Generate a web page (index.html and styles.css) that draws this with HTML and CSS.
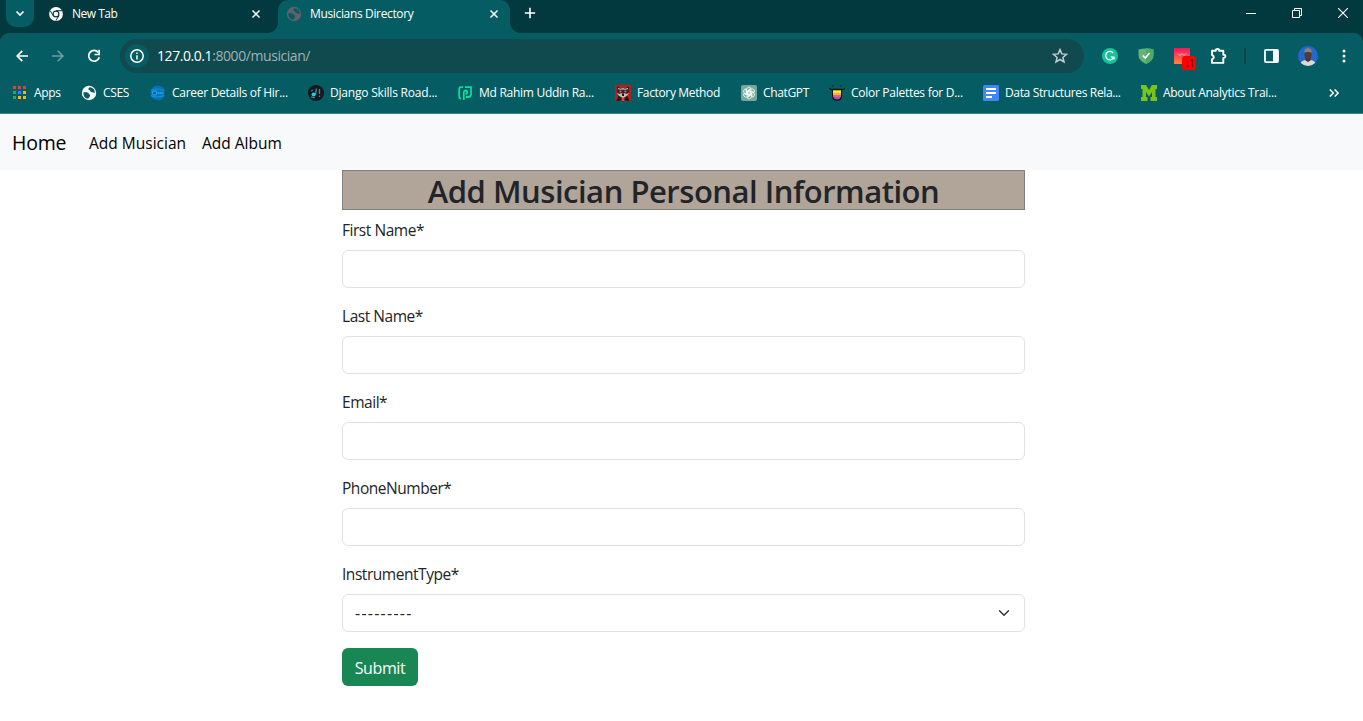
FILE: index.html
```html
<!DOCTYPE html>
<html lang="en">
<head>
<meta charset="utf-8">
<title>Musicians Directory</title>
<link rel="stylesheet" href="styles.css">
</head>
<body>
<svg width="0" height="0" class="defs">
  <symbol id="globe" viewBox="0 0 16 16"><circle cx="8" cy="8" r="7.2" fill="currentColor"/><path d="M2.300 7.200h3.200q2.200 0 2.400 1.500.100 1 1.400 1.100-.200 2.200-2.200 4-4.800-.800-4.800-6.600zM8.800 2.300q-1.600.5-1.400 1.900.200 1.100 1.600 1.100.3 1.900 1.900 2 1.600.1 2.900.9.200-4.300-3.400-5.700z" stroke="none" class="land"/></symbol>
  <symbol id="close" viewBox="0 0 10 10"><path d="M1.500 1.500l7 7M8.500 1.500l-7 7" stroke="#fff" stroke-width="1.500"/></symbol>
</svg>
<header class="browser">
  <div class="tabstrip">
    <button class="tabsearch" aria-label="Search tabs"><svg width="10" height="7" viewBox="0 0 10 7"><path d="M1.500 1.500L5 5l3.500-3.500" fill="none" stroke="#fff" stroke-width="1.700"/></svg></button>
    <div class="tab">
      <svg width="14" height="14" viewBox="0 0 14 14"><circle cx="7" cy="7" r="6.900" fill="#fff"/><circle cx="7" cy="7" r="3.500" fill="#02393e"/><circle cx="7" cy="7" r="2.300" fill="#fff"/><path d="M7 3.700h6M4.100 8.700L1.200 3.600M9.900 8.700l-3 5" stroke="#02393e" stroke-width="1"/></svg>
      <span class="tab-title t-new">New Tab</span>
      <svg class="x" width="10" height="10"><use href="#close"/></svg>
    </div>
    <div class="tab active">
      <svg class="fav-gray" width="16" height="16"><use href="#globe"/></svg>
      <span class="tab-title t-dir">Musicians Directory</span>
      <svg class="x" width="10" height="10"><use href="#close"/></svg>
    </div>
    <svg class="plus" width="12" height="12" viewBox="0 0 12 12"><path d="M6 .8v10.400M.8 6h10.400" stroke="#fff" stroke-width="1.600"/></svg>
    <div class="window">
      <svg width="10" height="10"><path d="M0 5.500h10" stroke="#fff"/></svg>
      <svg width="10" height="10"><path d="M.5 2.500h7v7h-7zM2.500 2.500v-2h7v7h-2" fill="none" stroke="#fff"/></svg>
      <svg width="10" height="10"><path d="M0 0l10 10M10 0L0 10" stroke="#fff" stroke-width="1.100"/></svg>
    </div>
  </div>
  <div class="toolbar">
    <svg class="back" width="12" height="12" viewBox="0 0 12 12"><path d="M12 6H1M6.300.8L1.100 6l5.200 5.200" fill="none" stroke="#fff" stroke-width="1.700"/></svg>
    <svg class="fwd" width="12" height="12" viewBox="0 0 12 12"><path d="M0 6h11M5.700.8L10.900 6l-5.200 5.200" fill="none" stroke="#6b9fa2" stroke-width="1.600"/></svg>
    <svg class="reload" width="14" height="14" viewBox="0 0 14 14"><path d="M11.300 3.400A5.400 5.400 0 1 0 12.300 8.300" fill="none" stroke="#fff" stroke-width="1.700"/><path d="M13 .8v5.400H7.600V4.700h3.700V.8z" fill="#fff"/></svg>
    <div class="omnibox">
      <span class="info"><svg width="14" height="14" viewBox="0 0 14 14"><circle cx="7" cy="7" r="6.200" fill="none" stroke="#fff" stroke-width="1.500"/><path d="M7 6.200v4.200M7 3.500v1.600" stroke="#fff" stroke-width="1.500"/></svg></span>
      <span class="url"><b>127.0.0.1</b>:8000/musician/</span>
      <svg class="star" width="16" height="16" viewBox="0 0 16 16"><path d="M8 1.600l1.800 4.300 4.700.4-3.600 3.100 1.100 4.600L8 11.500 4 14l1.100-4.600-3.600-3.100 4.700-.4z" fill="none" stroke="#c3cdcf" stroke-width="1.500"/></svg>
    </div>
    <div class="extensions">
      <svg width="16" height="16" viewBox="0 0 16 16"><circle cx="8" cy="8" r="8" fill="#15c39a"/><path d="M11.300 5.200A4.200 4.200 0 1 0 11.800 9.200H8.800M12 8.600v3" fill="none" stroke="#fff" stroke-width="1.300"/></svg>
      <svg width="16" height="16" viewBox="0 0 16 16"><path d="M.5 1.600Q8-.7 15.500 1.600V7q0 5.800-7.500 9Q.5 12.800.5 7z" fill="#67b279"/><path d="M8 0q4 .1 7.500 1.600V7q0 5.800-7.500 9z" fill="#4fa868"/><path d="M4.800 7.500l2.500 2.600 4.200-5" fill="none" stroke="#fff" stroke-width="1.600"/></svg>
      <span class="meter"><svg width="16" height="16" viewBox="0 0 16 16"><defs><linearGradient id="warm" x2="0" y2="1"><stop offset="0" stop-color="#f5145f"/><stop offset="1" stop-color="#ff853f"/></linearGradient></defs><path d="M0 0h16v16H0z" fill="url(#warm)"/><path d="M4 5.500l2 2 2-2 2 2 2-2" fill="none" stroke="#ffc4c8"/></svg><span class="badge">↓1</span></span>
      <svg width="18" height="18" viewBox="0 0 18 18"><path d="M3 3.700h3.800v-.5a1.700 1.300 0 0 1 3.400 0v.5H14.300v4h.6a1.500 1.600 0 0 1 0 3.200h-.6v5H3v-3.600a2.200 2.200 0 0 0 0-4.300z" fill="none" stroke="#fff" stroke-width="1.900" stroke-linejoin="round"/></svg>
      <i class="divider"></i>
      <svg class="panel" width="15" height="14" viewBox="0 0 15 14"><rect x="1" y=".9" width="13" height="12.200" rx=".8" fill="none" stroke="#fff" stroke-width="1.800"/><path d="M9 1h5v12H9z" fill="#fff"/></svg>
      <svg class="avatar" width="20" height="20" viewBox="0 0 20 20"><defs><clipPath id="round"><circle cx="10" cy="10" r="10"/></clipPath></defs><g clip-path="url(#round)"><path d="M0 0h20v20H0z" fill="#2469c9"/><path d="M2 20q0-5 5-6l3 1 3-1q5 1 5 6z" fill="#ddd9d8"/><path d="M7.500 11h5v3.500L10 16l-2.500-1.500z" fill="#4a332d"/><ellipse cx="10" cy="8.500" rx="3.600" ry="4.800" fill="#513b34"/><path d="M6.200 6.600Q6.200 2.300 10 2.300t3.800 4.300Q10 5.300 6.200 6.600z" fill="#8c8078"/></g></svg>
      <svg class="dots" width="4" height="14" viewBox="0 0 4 14"><g fill="#fff"><circle cx="2" cy="2" r="1.500"/><circle cx="2" cy="7" r="1.500"/><circle cx="2" cy="12" r="1.500"/></g></svg>
    </div>
  </div>
  <nav class="bookmarks">
    <a><svg width="16" height="16" viewBox="0 0 16 16"><path d="M1 1h3v3H1zM6 1h3v3H6zM11 1h3v3h-3z" fill="#f23b32"/><path d="M1 6h3v3H1zM1 11h3v3H1z" fill="#2fa456"/><path d="M6 6h3v3H6z" fill="#2589f5"/><path d="M11 6h3v3h-3zM6 11h3v3H6zM11 11h3v3h-3z" fill="#fbb409"/></svg><span>Apps</span></a>
    <a><svg class="fav-white" width="16" height="16"><use href="#globe"/></svg><span>CSES</span></a>
    <a class="loose"><svg width="16" height="16" viewBox="0 0 16 16"><path d="M1 5Q4-1 10 1q4 1 5 4l-1 3 1 3q-3 5-8 4-4 0-6-4l-1-3z" fill="#086fb3"/><path d="M1 5.500Q6 2.500 14 5.500M1 10.500q5 3 13 0" fill="none" stroke="#0798db" stroke-width="1.200"/><circle cx="4.500" cy="8" r="2.100" fill="#07588c" stroke="#18a4e6" stroke-width="1.200"/><path d="M8.500 7v2M10.500 7v2M12.500 7v2M7 8h7" stroke="#18a4e6" stroke-width="1"/></svg><span>Career Details of Hir...</span></a>
    <a class="looser"><svg width="16" height="16" viewBox="0 0 16 16"><circle cx="8" cy="8" r="8" fill="#15191e"/><path d="M8.300 3.500L7.500 10M11.500 4v5M11.500 10.500v1.500" stroke="#2699b2" stroke-width="1.300"/><circle cx="5.600" cy="9.500" r="2" fill="#32c5df"/><path d="M3 6l2-1M3 12l4 .8" stroke="#2699b2"/></svg><span>Django Skills Road...</span></a>
    <a class="loose"><svg width="16" height="16" viewBox="0 0 16 16"><path d="M6 2.200H4Q2.200 2.200 2.200 4.500v7q0 2 1.800 2.200M8 2.200h6v6.500q0 3.300-3 3.300H9M6.800 15V7.500q0-2 1.700-2t1.700 1.800Q10.200 9 8.500 9" fill="none" stroke="#03e0a0" stroke-width="1.800"/></svg><span>Md Rahim Uddin Ra...</span></a>
    <a><svg width="16" height="16" viewBox="0 0 16 16"><path d="M0 0h16v16H0z" fill="#b51e20"/><path d="M2 1l3 2h6l3-2v5l-2 6-4 2-4-2-2-6z" fill="#352426"/><path d="M3 3l3 .8 2-.8 2 .8 3-.8v1.200l-3 .5-2-.3-2 .3-3-.5zM2 8l3 1 1-1 2 1 2-1 1 1 3-1-2 3-4 2-4-2z" fill="#cdbbb2"/><circle cx="5.500" cy="6.500" r="1.100" fill="#9d8983"/><circle cx="10.500" cy="6.500" r="1.100" fill="#9d8983"/><path d="M7 9h2v2H7z" fill="#18171b"/><path d="M2 16l2-4 2 3M14 16l-2-4-2 3" stroke="#28191b" stroke-width="1.500"/><path d="M7 13h2v3H7z" fill="#ee3838"/></svg><span>Factory Method</span></a>
    <a><svg width="16" height="16" viewBox="0 0 16 16"><rect width="16" height="16" rx="2" fill="#75a99b"/><g fill="none" stroke="#fff" stroke-width=".8"><path id="petal" d="M5.600 8.800V4.500a2.400 2.400 0 0 1 4.500-1.100L6.800 5.300v4.200z"/><use href="#petal" transform="rotate(60 8 8)"/><use href="#petal" transform="rotate(120 8 8)"/><use href="#petal" transform="rotate(180 8 8)"/><use href="#petal" transform="rotate(240 8 8)"/><use href="#petal" transform="rotate(300 8 8)"/></g></svg><span>ChatGPT</span></a>
    <a class="loose"><svg width="16" height="16" viewBox="0 0 16 16"><path d="M3 4h10v7q0 4.800-5 4.800T3 11z" fill="#111"/><path d="M4 5h8v3H4z" fill="#ffe62d"/><path d="M4 8h8v2H4z" fill="#ffad48"/><path d="M4 10h8v2H4z" fill="#f55882"/><path d="M4.300 12h7.400Q11 14.600 8 14.600T4.300 12z" fill="#a453b9"/><path d="M.5 3q1.500 2 3 1.500h9Q14.500 5 15.500 3" fill="none" stroke="#111" stroke-width="1.300"/><path d="M3 0h2v1.500H3zM11 0h2v1.500h-2z" fill="#16353a"/></svg><span>Color Palettes for D...</span></a>
    <a><svg width="16" height="16" viewBox="0 0 16 16"><rect width="16" height="16" rx="1.500" fill="#4285f4"/><path d="M3 4h10M3 8h10M3 12h6" stroke="#fff" stroke-width="1.800"/></svg><span>Data Structures Rela...</span></a>
    <a class="loose"><svg width="16" height="16" viewBox="0 0 16 16"><path d="M0 0h5l3 5 3-5h5v4h-1.500v8H16v4H9.500v-4H11V7l-3 4.500L5 7v5h1.500v4H0v-4h1.500V4H0z" fill="#79c41c"/></svg><span>About Analytics Trai...</span></a>
    <svg class="more" width="10" height="8" viewBox="0 0 10 8"><path d="M.8.5L4.300 4 .8 7.500M5.600.5L9.100 4 5.600 7.500" fill="none" stroke="#fff" stroke-width="1.500"/></svg>
  </nav>
</header>
<nav class="navbar">
  <a class="brand">Home</a>
  <a class="link-musician">Add Musician</a>
  <a class="link-album">Add Album</a>
</nav>
<main class="container">
  <h2><span>Add Musician Personal Information</span></h2>
  <form>
    <div class="field"><label for="first">First Name*</label><input id="first" type="text"></div>
    <div class="field"><label for="last">Last Name*</label><input id="last" type="text"></div>
    <div class="field"><label for="email">Email*</label><input id="email" type="email"></div>
    <div class="field"><label for="phone">PhoneNumber*</label><input id="phone" type="text"></div>
    <div class="field"><label for="instrument">InstrumentType*</label>
      <div id="instrument" class="select"><span>---------</span><svg width="12" height="12" viewBox="0 0 16 16"><path d="M2 5l6 6 6-6" fill="none" stroke="#343a40" stroke-width="2" stroke-linecap="round" stroke-linejoin="round"/></svg></div>
    </div>
    <button class="submit" type="button"><span>Submit</span></button>
  </form>
</main>
</body>
</html>
```
FILE: styles.css
```css
* { box-sizing: border-box; }
body { margin: 0; height: 721px; overflow: hidden; background: #fff; color: #212529; font: 16px/24px "Open Sans", "Noto Sans", sans-serif; }
button { font: inherit; border: 0; padding: 0; }
svg { display: block; flex: none; }
.defs { position: absolute; }

.browser { height: 114px; background: #02393e; color: #fff; font-size: 12px; line-height: 16px; }
.tabstrip { display: flex; height: 33px; padding-left: 6px; }
.tabsearch { display: flex; align-items: center; justify-content: center; width: 28px; height: 27px; background: #055d63; border-radius: 0 0 10px 10px; }
.tab { display: flex; align-items: center; height: 27px; width: 212px; margin-left: 15px; }
.tab-title { margin-left: 9px; white-space: nowrap; letter-spacing: -.35px; }
.t-new { letter-spacing: -.5px; }
.tab .x { margin-left: auto; }
.tab.active { position: relative; width: 232px; height: 33px; margin-left: 17px; padding: 0 11px 6px 8px; background: #055d63; border-radius: 10px 10px 0 0; }
.tab.active .tab-title { margin-left: 8px; }
.tab.active::before, .tab.active::after { content: ""; position: absolute; bottom: 0; width: 10px; height: 10px; }
.tab.active::before { left: -10px; background: radial-gradient(circle at 0 0, transparent 9.500px, #055d63 10px); }
.tab.active::after { right: -10px; background: radial-gradient(circle at 100% 0, transparent 9.500px, #055d63 10px); }
.land { fill: #055d63; }
.fav-gray { color: #5f6368; }
.fav-white { color: #fff; }
.plus { margin: 7px 0 0 14px; }
.window { display: flex; gap: 36px; margin: 8px 15px 0 auto; }

.toolbar { display: flex; align-items: center; height: 41px; padding: 5px 0 0 16px; background: #055d63; border-radius: 9px 9px 0 0; }
.fwd { margin-left: 24px; }
.reload { margin-left: 23px; }
.omnibox { display: flex; align-items: center; width: 964px; height: 34px; margin-left: 19px; padding: 0 16px 0 5px; background: #10494e; border-radius: 17px; }
.info { display: flex; align-items: center; justify-content: center; width: 24px; height: 24px; background: #055d63; border-radius: 50%; }
.url { margin-left: 8px; font-size: 14px; letter-spacing: -.43px; color: #9fb4b6; }
.url b { font-weight: 400; color: #fff; }
.star { margin-left: auto; }
.extensions { display: flex; align-items: center; margin-left: 18px; }
.extensions > :nth-child(2) { margin-left: 20px; }
.meter { position: relative; margin-left: 20px; }
.badge { position: absolute; left: 8px; top: 8px; width: 14px; height: 14px; background: #f00; border-radius: 3px; color: #222; font-size: 10px; line-height: 14px; text-align: center; letter-spacing: -1px; }
.extensions > :nth-child(4) { margin-left: 19px; }
.divider { width: 2px; height: 16px; margin-left: 17px; background: #03474c; }
.panel { margin-left: 18px; }
.avatar { margin-left: 19px; }
.dots { margin-left: 24px; }

.bookmarks { display: grid; grid-template-columns: 69px 69px 158px 149px 158px 126px 88px 154px 158px 188px 10px; align-items: center; height: 40px; padding: 0 0 2px 12px; background: #055d63; border-bottom: 1px solid #3b8286; }
.bookmarks a { display: flex; align-items: center; gap: 6px; white-space: nowrap; letter-spacing: -.35px; }
.bookmarks .loose { letter-spacing: -.28px; }
.bookmarks .looser { letter-spacing: -.2px; }

.navbar { display: flex; align-items: center; height: 56px; padding: 1px 0 0 12px; background: #f8f9fa; color: #000; font-size: 15.500px; white-space: nowrap; }
.brand { width: 77px; font-size: 19.500px; line-height: 30px; letter-spacing: -.2px; }
.link-musician { width: 113px; }

.container { width: 683px; margin-left: 342px; }
h2 { display: flex; justify-content: center; height: 40px; margin: 0 0 8px; border: 1px solid #808080; background: #b1a499; font-size: 31px; font-weight: 600; line-height: 41px; letter-spacing: -.48px; white-space: nowrap; }
.field { margin-bottom: 16px; }
.field label { display: block; width: max-content; margin-bottom: 8px; font-size: 15.500px; letter-spacing: -.46px; }
.field input, .select { display: block; width: 100%; height: 38px; padding: 6px 12px; border: 1px solid #dee2e6; border-radius: 6px; background: #fff; font: inherit; outline: 0; }
.select { display: flex; align-items: center; justify-content: space-between; padding-right: 14px; letter-spacing: 1.250px; }
.submit { width: 76px; height: 38px; padding-top: 1px; border-radius: 6px; background: #198754; color: #fff; letter-spacing: -.4px; }
```
